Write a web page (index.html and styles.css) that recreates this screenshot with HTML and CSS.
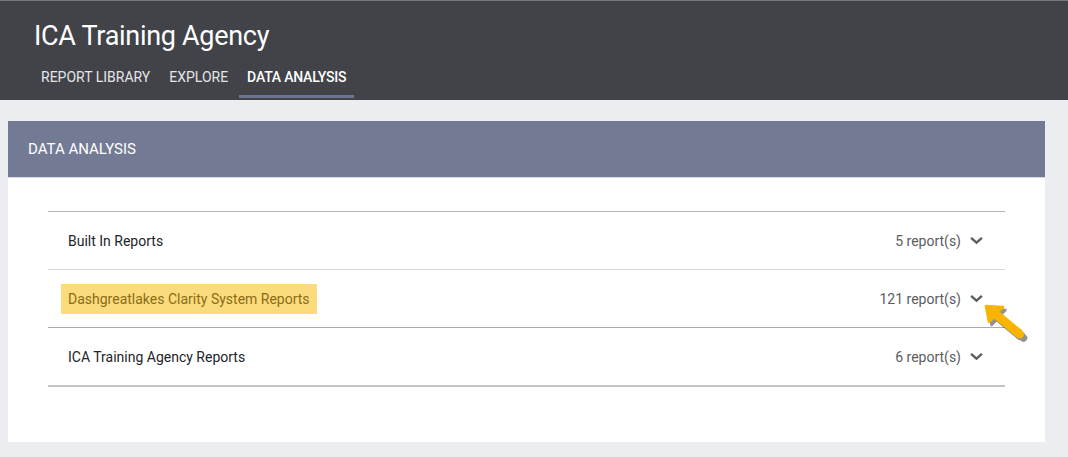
FILE: index.html
```html
<!DOCTYPE html>
<html lang="en">
<head>
    <meta charset="UTF-8">
    <meta name="viewport" content="width=device-width, initial-scale=1.0">
    <title>Data Analysis</title>
    <link rel="stylesheet" href="styles.css">
</head>
<body>
    <!-- Header -->
    <div class="header">
        <h1 class="title">ICA Training Agency</h1>
        <div class="nav">
            <a class="nav-item">REPORT LIBRARY</a>
            <a class="nav-item">EXPLORE</a>
            <a class="nav-item active">DATA ANALYSIS</a>
        </div>
    </div>

    <div class="page">
        <div class="card">
            <div class="card-head">DATA ANALYSIS</div>
            <div class="card-body">
                <div class="list">
                    <div class="row">
                        <span class="row-name">Built In Reports</span>
                        <span class="row-count">5 report(s)</span>
                        <svg class="chev" viewBox="0 0 12 8"><path d="M1 1.5 L6 6 L11 1.5" /></svg>
                    </div>
                    <div class="row">
                        <span class="row-name mark">Dashgreatlakes Clarity System Reports</span>
                        <span class="row-count">121 report(s)</span>
                        <svg class="chev" viewBox="0 0 12 8"><path d="M1 1.5 L6 6 L11 1.5" /></svg>
                        <!-- pointer arrow -->
                        <svg class="pointer" viewBox="0 0 50 42">
                            <g transform="translate(2.5 3)" fill="#3a3a3a" stroke="#3a3a3a" opacity="0.55">
                                <path d="M2 2 L19 3 L14 8 L37 27 L33 32 L10 13 L5 18 Z" stroke-width="2.5" stroke-linejoin="round"/>
                                <line x1="35" y1="29.5" x2="37" y2="31" stroke-width="7.5" stroke-linecap="round"/>
                            </g>
                            <path d="M2 2 L19 3 L14 8 L37 27 L33 32 L10 13 L5 18 Z" fill="#f8b400" stroke="#f8b400" stroke-width="2.5" stroke-linejoin="round"/>
                            <line x1="35" y1="29.5" x2="36" y2="30.5" stroke="#f8b400" stroke-width="7.5" stroke-linecap="round"/>
                        </svg>
                    </div>
                    <div class="row">
                        <span class="row-name">ICA Training Agency Reports</span>
                        <span class="row-count">6 report(s)</span>
                        <svg class="chev" viewBox="0 0 12 8"><path d="M1 1.5 L6 6 L11 1.5" /></svg>
                    </div>
                </div>
            </div>
        </div>
    </div>
</body>
</html>
```

FILE: styles.css
```css
body {
    margin: 0;
    background-color: #ecedf1;
    font-family: Roboto, "Liberation Sans", Arial, sans-serif;
}
.header {
    background-color: #414349;
    border-top: 1px solid #77787c;
    height: 100px;
    padding: 0 0 0 34px;
    box-sizing: border-box;
}
.title {
    margin: 0;
    padding-top: 18px;
    font-size: 27px;
    font-weight: 400;
    color: #ffffff;
    line-height: 34px;
    letter-spacing: -0.3px;
}
.nav {
    display: flex;
    gap: 3px;
    margin-top: 14px;
    margin-left: -1px;
}
.nav-item {
    color: #e4e5e8;
    font-size: 14px;
    padding: 2px 8px 0 8px;
    height: 31px;
    line-height: 16px;
    box-sizing: border-box;
    border-bottom: 3px solid transparent;
}
.nav-item.active {
    color: #ffffff;
    font-weight: 500;
    letter-spacing: -0.2px;
    border-bottom-color: #6d7491;
}
.page {
    padding: 21px 23px 0 8px;
}
.card {
    background: #ffffff;
    height: 321px;
}
.card-head {
    background-color: #737b94;
    color: #ffffff;
    height: 57px;
    line-height: 56px;
    padding-left: 20px;
    font-size: 15px;
    border-bottom: 1px solid #d7d9e0;
    box-sizing: border-box;
}
.card-body {
    padding: 33px 40px 0 40px;
}
.list {
    border-top: 1px solid #b5b5b5;
}
.row {
    position: relative;
    display: flex;
    align-items: center;
    height: 57px;
    border-bottom: 1px solid #d9d9d9;
    padding: 0 22px 0 20px;
    font-size: 14px;
}
.row:nth-child(2) {
    border-bottom-color: #a9a9a9;
}
.row:last-child {
    border-bottom: 2px solid #c4c4c4;
}
.row-name {
    color: #222428;
    flex: 1;
}
.row-name.mark {
    flex: 0 0 auto;
    background-color: #fcdb7d;
    color: #8a6c15;
    padding: 7px;
    margin-left: -7px;
    margin-right: auto;
}
.row-count {
    color: #5a5c62;
}
.chev {
    width: 13px;
    height: 9px;
    margin-left: 9px;
    fill: none;
    stroke: #5c5e63;
    stroke-width: 2.2;
}
.pointer {
    position: absolute;
    left: 936px;
    top: 34px;
    width: 50px;
    height: 42px;
}
```
